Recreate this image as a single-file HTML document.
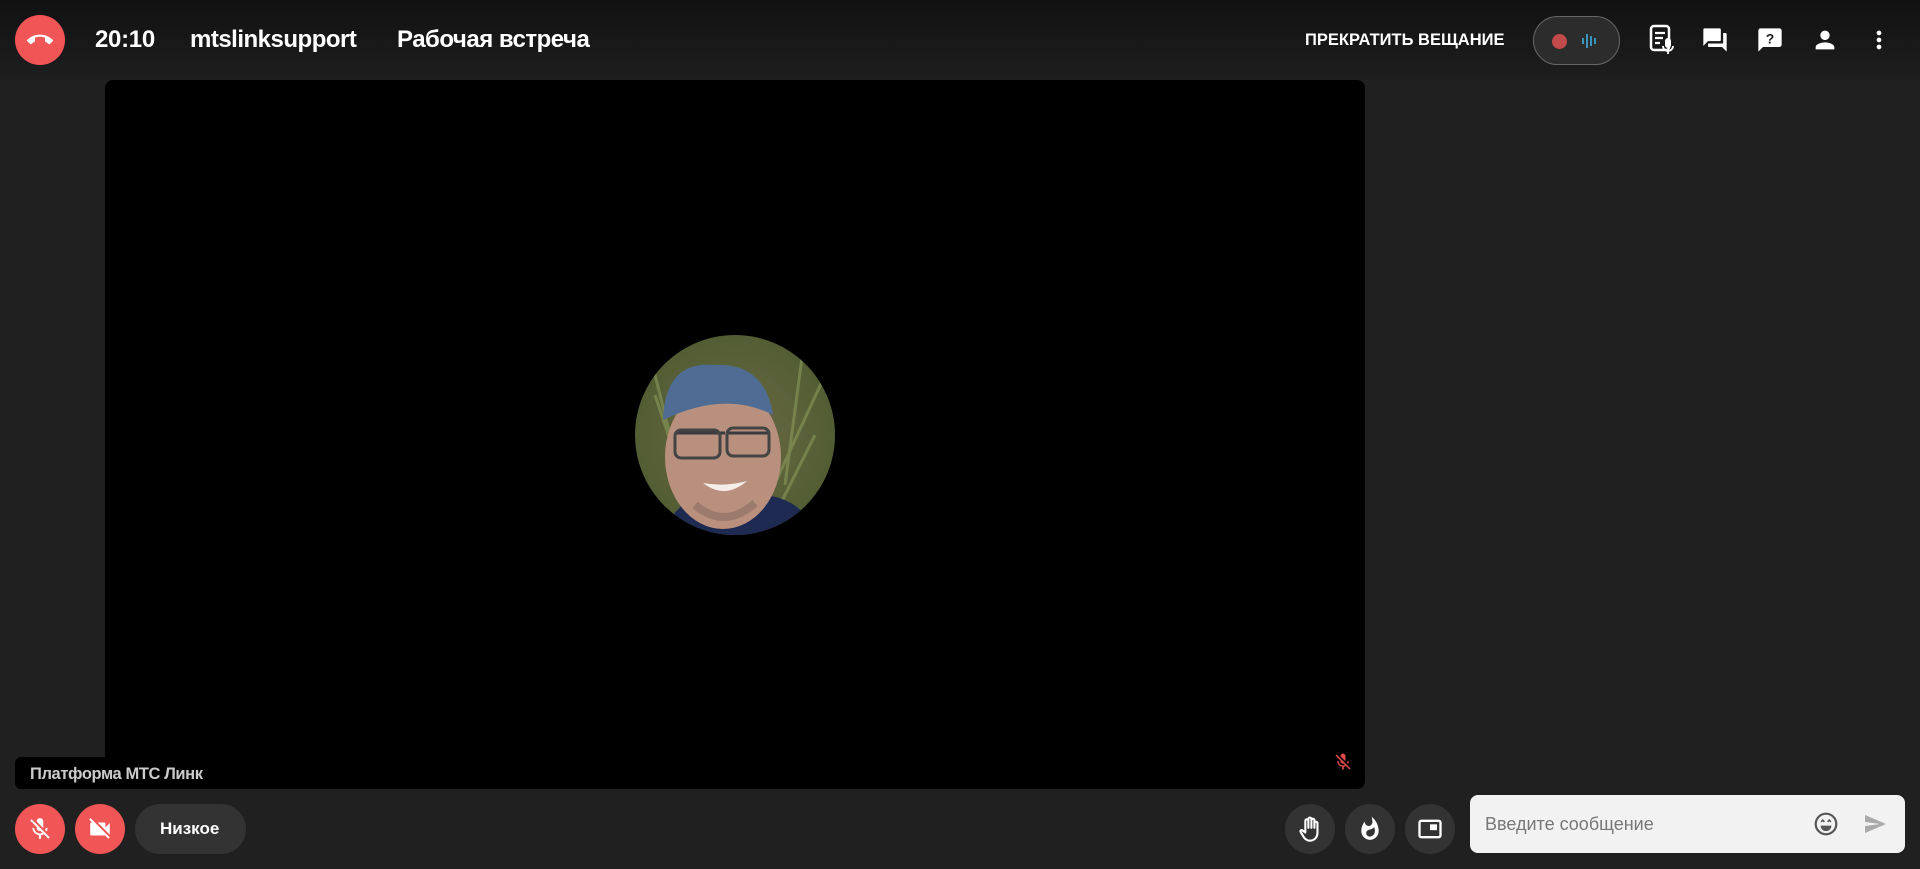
<!DOCTYPE html>
<html><head><meta charset="utf-8"><style>
*{margin:0;padding:0;box-sizing:border-box}
body{width:1920px;height:869px;background:#202020;font-family:"Liberation Sans",sans-serif;position:relative;overflow:hidden;color:#fff}
.hdr{position:absolute;left:0;top:0;width:1920px;height:80px;background:linear-gradient(#111,#1e1e1e)}
.abs{position:absolute}
.circ{position:absolute;border-radius:50%;display:flex;align-items:center;justify-content:center}
.red{background:#f05656}
.dark{background:#333}
.t{position:absolute;white-space:nowrap}
</style></head><body>
<div class="hdr"></div>
<div class="circ red" style="left:15px;top:15px;width:50px;height:50px">
<svg width="26" height="26" viewBox="0 0 24 24"><path fill="#fff" d="M12 9c-1.6 0-3.15.25-4.6.72v3.1c0 .39-.23.74-.56.9-.98.49-1.870 1.12-2.66 1.85-.18.18-.43.28-.7.28-.28 0-.53-.11-.71-.29L.29 13.08a.956.956 0 0 1 0-1.36C3.34 8.78 7.46 7 12 7s8.66 1.78 11.71 4.72c.18.18.29.43.29.71 0 .28-.11.53-.29.71l-2.48 2.48c-.18.18-.43.29-.71.29-.27 0-.52-.11-.7-.28a11.270 11.270 0 0 0-2.67-1.85.996.996 0 0 1-.56-.9v-3.1C15.15 9.25 13.6 9 12 9z"/></svg></div>
<div class="t" style="left:95px;top:26px;font-size:24px;font-weight:bold;letter-spacing:-0.3px">20:10</div>
<div class="t" style="left:190px;top:26px;font-size:24px;font-weight:bold;letter-spacing:-0.5px">mtslinksupport</div>
<div class="t" style="left:397px;top:26px;font-size:24px;font-weight:bold;letter-spacing:-0.5px">Рабочая встреча</div>
<div class="t" style="left:1305px;top:31px;font-size:16.5px;font-weight:bold">ПРЕКРАТИТЬ ВЕЩАНИЕ</div>
<div class="abs" style="left:1533px;top:16px;width:87px;height:49px;border-radius:25px;background:#2c2c2c;border:1px solid #666"></div>
<div class="circ" style="left:1552px;top:34px;width:15px;height:15px;background:#c24a4a"></div>
<svg class="abs" style="left:1581px;top:32px" width="18" height="18" viewBox="0 0 18 18"><g stroke="#3aa0d0" stroke-width="1.8"><path d="M2 6v6M6 2v14M10 4v10M14 6v6"/></g></svg>
<svg class="abs" style="left:1649px;top:24px" width="28" height="32" viewBox="0 0 28 32"><rect x="2" y="2" width="18" height="24" rx="3" fill="none" stroke="#fff" stroke-width="2.5"/><path d="M6 9h10M6 14h8M6 19h5" stroke="#fff" stroke-width="2.2"/><rect x="16" y="14" width="6" height="10" rx="3" fill="#fff"/><path d="M14 22a5 5 0 0 0 10 0M19 27v3" stroke="#fff" stroke-width="1.8" fill="none"/></svg>
<svg class="abs" style="left:1701px;top:26px" width="28" height="28" viewBox="0 0 24 24"><path fill="#fff" d="M21 6h-2v9H6v2c0 .55.45 1 1 1h11l4 4V7c0-.55-.45-1-1-1zm-4 6V3c0-.55-.45-1-1-1H3c-.55 0-1 .45-1 1v14l4-4h10c.55 0 1-.45 1-1z"/></svg>
<svg class="abs" style="left:1756px;top:26px" width="28" height="28" viewBox="0 0 24 24"><path fill="#fff" d="M20 2H4c-1.1 0-2 .9-2 2v18l4-4h14c1.1 0 2-.9 2-2V4c0-1.1-.9-2-2-2z"/><text x="12" y="15" font-size="12" font-weight="bold" text-anchor="middle" fill="#1a1a1a" font-family="Liberation Sans">?</text></svg>
<svg class="abs" style="left:1811px;top:26px" width="28" height="28" viewBox="0 0 24 24"><path fill="#fff" d="M12 12c2.21 0 4-1.79 4-4s-1.79-4-4-4-4 1.79-4 4 1.79 4 4 4zm0 2c-2.670 0-8 1.34-8 4v2h16v-2c0-2.66-5.33-4-8-4z"/></svg>
<svg class="abs" style="left:1865px;top:26px" width="28" height="28" viewBox="0 0 24 24"><path fill="#fff" d="M12 8c1.1 0 2-.9 2-2s-.9-2-2-2-2 .9-2 2 .9 2 2 2zm0 2c-1.1 0-2 .9-2 2s.9 2 2 2 2-.9 2-2-.9-2-2-2zm0 6c-1.1 0-2 .9-2 2s.9 2 2 2 2-.9 2-2-.9-2-2-2z"/></svg>

<div class="abs" style="left:105px;top:80px;width:1260px;height:709px;background:#000;border-radius:8px"></div>
<svg class="abs" style="left:635px;top:335px" width="200" height="200" viewBox="0 0 200 200">
<defs><clipPath id="c"><circle cx="100" cy="100" r="100"/></clipPath>
<radialGradient id="g" cx="0.5" cy="0.5" r="0.6"><stop offset="0" stop-color="#6b6a45"/><stop offset="1" stop-color="#4e5a30"/></radialGradient></defs>
<g clip-path="url(#c)"><rect width="200" height="200" fill="url(#g)"/>
<path d="M10 0 L40 120 M170 0 L150 150 M190 40 L130 170 M20 60 L60 180 M180 100 L140 180" stroke="#8a9a5a" stroke-width="3" opacity=".6"/>
<path d="M30 200 Q40 160 80 160 L130 160 Q170 165 180 200Z" fill="#1e2a52"/>
<ellipse cx="88" cy="122" rx="58" ry="72" fill="#b98f7d"/>
<path d="M28 85 Q30 25 80 30 Q130 28 138 80 Q90 55 28 85Z" fill="#4f6d94"/>
<path d="M40 98 h50 M93 98 h42" stroke="#3a3a3f" stroke-width="3"/>
<rect x="40" y="95" width="45" height="28" rx="6" fill="none" stroke="#444" stroke-width="3"/><rect x="92" y="93" width="42" height="28" rx="6" fill="none" stroke="#444" stroke-width="3"/>
<path d="M68 148 Q90 165 112 146 Q90 152 68 148Z" fill="#f5eee8"/>
<path d="M60 170 Q90 195 120 168" stroke="#8a6e60" stroke-width="8" fill="none" opacity=".6"/>
</g></svg>
<svg class="abs" style="left:1333px;top:752px" width="20" height="20" viewBox="0 0 24 24"><path fill="#e04a4a" d="M19 11h-1.7c0 .74-.16 1.43-.43 2.05l1.23 1.23c.56-.98.9-2.09.9-3.28zm-4.020.17c0-.06.02-.11.02-.17V5c0-1.66-1.34-3-3-3S9 3.34 9 5v.18l5.98 5.99zM4.27 3 3 4.27l6.01 6.01V11c0 1.66 1.33 3 2.99 3 .22 0 .44-.03.65-.08l1.66 1.66c-.71.33-1.5.52-2.31.52-2.76 0-5.3-2.1-5.3-5.1H5c0 3.41 2.72 6.23 6 6.72V21h2v-3.28c.91-.13 1.77-.45 2.54-.9L19.73 21 21 19.73 4.27 3z"/></svg>

<div class="abs" style="left:15px;top:757px;width:218px;height:32px;background:#000;border-radius:6px"></div>
<div class="t" style="left:30px;top:765px;font-size:16.5px;color:#ccc;font-weight:bold;letter-spacing:-0.4px">Платформа МТС Линк</div>

<div class="circ red" style="left:15px;top:804px;width:50px;height:50px"><svg width="26" height="26" viewBox="0 0 24 24"><path fill="#fff" d="M19 11h-1.7c0 .74-.16 1.43-.43 2.05l1.23 1.23c.56-.98.9-2.09.9-3.28zm-4.020.17c0-.06.02-.11.02-.17V5c0-1.66-1.34-3-3-3S9 3.34 9 5v.18l5.98 5.99zM4.27 3 3 4.27l6.01 6.01V11c0 1.66 1.33 3 2.99 3 .22 0 .44-.03.65-.08l1.66 1.66c-.71.33-1.5.52-2.31.52-2.76 0-5.3-2.1-5.3-5.1H5c0 3.41 2.72 6.23 6 6.72V21h2v-3.28c.91-.13 1.77-.45 2.54-.9L19.73 21 21 19.73 4.27 3z"/></svg></div>
<div class="circ red" style="left:75px;top:804px;width:50px;height:50px"><svg width="26" height="26" viewBox="0 0 24 24"><path fill="#fff" d="M21 6.5l-4 4V7c0-.55-.45-1-1-1H9.82L21 17.18V6.5zM3.27 2 2 3.27 4.73 6H4c-.55 0-1 .45-1 1v10c0 .55.45 1 1 1h12c.21 0 .39-.08.54-.18L19.73 21 21 19.730 3.27 2z"/></svg></div>
<div class="abs" style="left:135px;top:804px;width:111px;height:50px;border-radius:25px;background:#333"></div>
<div class="t" style="left:160px;top:819px;font-size:17px;font-weight:bold">Низкое</div>

<div class="circ dark" style="left:1285px;top:804px;width:50px;height:50px"><svg width="28" height="28" viewBox="0 0 24 24"><path fill="none" stroke="#fff" stroke-width="1.8" stroke-linejoin="round" d="M8 12V5a1.3 1.3 0 0 1 2.6 0v6V3.5a1.3 1.3 0 0 1 2.6 0V11V4.5a1.3 1.3 0 0 1 2.6 0V11V7a1.3 1.3 0 0 1 2.6 0v8c0 4-2.5 7-6.5 7-2.5 0-4-1.2-5.2-3L4 14.5c-.6-1 .6-2 1.5-1.3L8 15z"/></svg></div>
<div class="circ dark" style="left:1345px;top:804px;width:50px;height:50px"><svg width="26" height="26" viewBox="0 0 24 24"><path fill="#fff" d="M13.5.67s.74 2.65.74 4.8c0 2.06-1.35 3.73-3.41 3.73-2.07 0-3.63-1.67-3.630-3.73l.03-.36C5.21 7.51 4 10.62 4 14c0 4.42 3.58 8 8 8s8-3.58 8-8C20 8.61 17.41 3.8 13.5.67zM11.71 19c-1.78 0-3.22-1.4-3.22-3.14 0-1.62 1.05-2.76 2.81-3.12 1.77-.36 3.6-1.21 4.62-2.58.39 1.29.59 2.65.59 4.04 0 2.65-2.15 4.8-4.8 4.8z"/></svg></div>
<div class="circ dark" style="left:1405px;top:804px;width:50px;height:50px"><svg width="28" height="28" viewBox="0 0 24 24"><rect x="3" y="5" width="18" height="14" rx="1.5" fill="none" stroke="#fff" stroke-width="2"/><rect x="12" y="8" width="6" height="5" fill="#fff"/></svg></div>

<div class="abs" style="left:1470px;top:795px;width:435px;height:58px;background:#f2f2f2;border-radius:8px"></div>
<div class="t" style="left:1485px;top:814px;font-size:18px;color:#777">Введите сообщение</div>
<svg class="abs" style="left:1813px;top:811px" width="26" height="26" viewBox="0 0 24 24"><circle cx="12" cy="12" r="9.5" fill="none" stroke="#555" stroke-width="2"/><path d="M7 13.5h10a5 5 0 0 1-10 0z" fill="#555"/><path d="M7.5 10l1.5-1.5 1.5 1.5M13.5 10l1.5-1.5 1.5 1.5" stroke="#555" stroke-width="1.5" fill="none"/></svg>
<svg class="abs" style="left:1862px;top:812px" width="26" height="24" viewBox="0 0 24 24"><path fill="#aaa" d="M2.01 21 23 12 2.01 3 2 10l15 2-15 2z"/></svg>
</body></html>
